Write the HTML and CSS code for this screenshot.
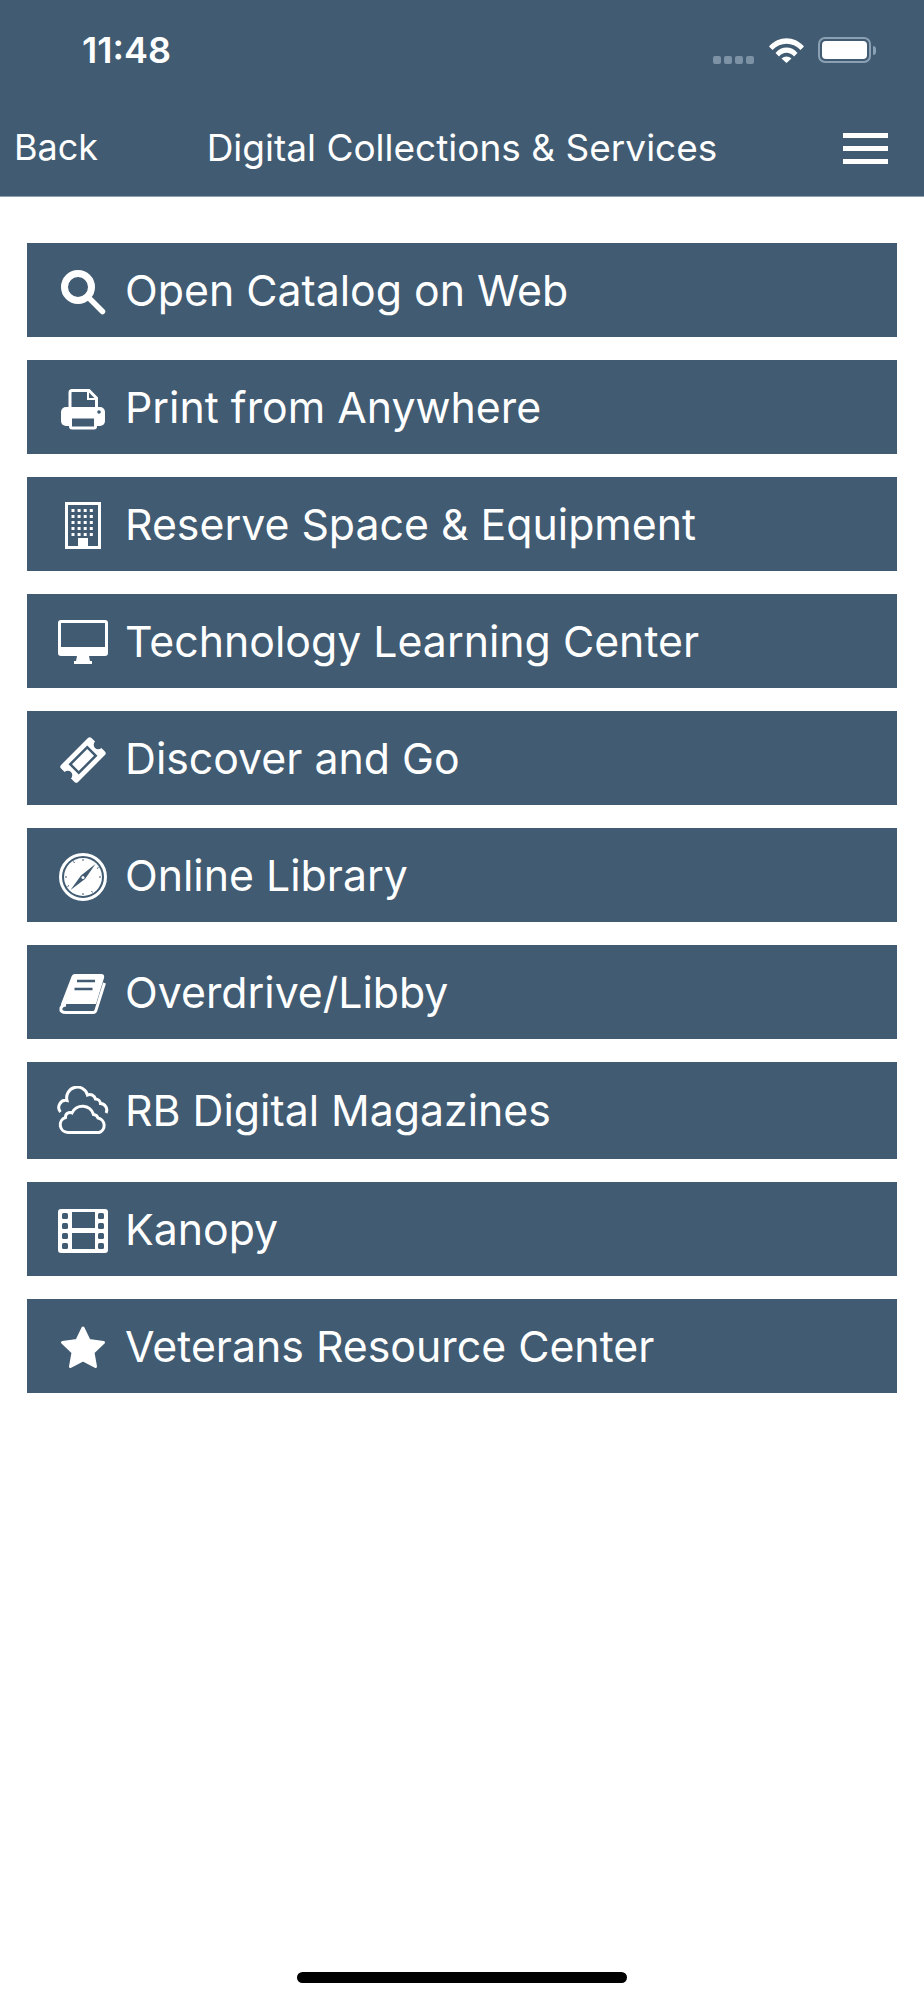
FILE: index.html
```html
<!DOCTYPE html>
<html lang="en">
<head>
  <meta charset="UTF-8" />
  <title>Digital Collections &amp; Services</title>
  <meta name="viewport" content="width=device-width, initial-scale=1.0" />
  <link rel="stylesheet" href="styles.css">
</head>
<body>
  <header class="topbar">
    <div class="status">
      <span class="time">11:48</span>
      <div class="status-icons">
        <div class="signal"><i></i><i></i><i></i><i></i></div>
        <svg class="wifi" viewBox="0 0 35 26">
          <path d="M0 9.500C9.500 -1.500 25.500 -1.500 35 9.500L31.500 13C23.500 4.500 11.500 4.500 3.500 13Z"/>
          <path d="M6.500 16C12.500 8.800 22.500 8.800 28.500 16L25 19.500C20.800 14.600 14.200 14.600 10 19.500Z"/>
          <path d="M12.500 21.500C15.500 18.800 19.500 18.800 22.500 21.500L17.500 26Z"/>
        </svg>
        <div class="battery"><div class="battery-level"></div></div>
        <div class="battery-nub"></div>
      </div>
    </div>
    <nav class="navbar">
      <a class="back">Back</a>
      <h1>Digital Collections &amp; Services</h1>
      <div class="menu"><i></i><i></i><i></i></div>
    </nav>
  </header>

  <main class="links">
    <a class="link">
      <svg class="icon" viewBox="0 0 52 52"><circle cx="21" cy="21" r="13.500" class="line thick"/><path d="M33 33L45.500 45.500" class="line handle"/></svg>
      <span>Open Catalog on Web</span>
    </a>
    <a class="link">
      <svg class="icon" viewBox="0 0 52 52">
        <path d="M13 26V9.500Q13 7.500 15 7.500H32L39.500 15V26" class="line"/>
        <path d="M31 8V16H39" class="line thin"/>
        <rect x="4" y="24" width="44" height="19" rx="5" class="fill"/>
        <rect x="13.500" y="34" width="25" height="11" rx="1.500" class="dark-box"/>
        <circle cx="42" cy="29" r="1.800" class="dark"/>
      </svg>
      <span>Print from Anywhere</span>
    </a>
    <a class="link">
      <svg class="icon" viewBox="0 0 52 52">
        <rect x="9.500" y="3.500" width="33" height="44" class="line"/>
        <path d="M14.500 10.500H38M14.500 16.500H38M14.500 22.500H38M14.500 28.500H38M14.500 34.500H38" class="line dots"/>
        <rect x="21" y="38" width="10" height="10" class="fill"/>
      </svg>
      <span>Reserve Space &amp; Equipment</span>
    </a>
    <a class="link">
      <svg class="icon" viewBox="0 0 52 52">
        <path fill-rule="evenodd" class="fill" d="M4 3H48Q51 3 51 6V36Q51 39 48 39H32L33 44H35V47H17V44H19L20 39H4Q1 39 1 36V6Q1 3 4 3ZM4 6V30H48V6Z"/>
      </svg>
      <span>Technology Learning Center</span>
    </a>
    <a class="link">
      <svg class="icon" viewBox="0 0 52 52">
        <g transform="rotate(-45 26 26)">
          <path class="fill" d="M7 14H45Q47.500 14 47.500 16.500V21.500A4.500 4.500 0 0 0 47.500 30.500V35.500Q47.500 38 45 38H7Q4.500 38 4.500 35.500V30.500A4.500 4.500 0 0 0 4.500 21.500V16.500Q4.500 14 7 14Z"/>
          <rect x="14" y="20" width="24" height="12" class="dark-line"/>
        </g>
      </svg>
      <span>Discover and Go</span>
    </a>
    <a class="link">
      <svg class="icon" viewBox="0 0 52 52">
        <circle cx="26" cy="26" r="22.500" class="line"/>
        <circle cx="26" cy="26" r="19" class="fill"/>
        <path d="M38.500 13L28 28L24 24.500ZM13.500 39L28 28L24 24.500Z" class="dark"/>
        <circle cx="26" cy="26.500" r="1.500" class="fill"/>
        <path d="M26 8V10M26 42V44M8 26H10M42 26H44M16.500 10.500L17.500 12M35.500 41.500L34.500 40M10.500 35.500L12 34.500M41.500 16.500L40 17.500" class="dark-tick"/>
      </svg>
      <span>Online Library</span>
    </a>
    <a class="link">
      <svg class="icon" viewBox="0 0 52 52">
        <path class="fill" d="M18 6H44Q48 6 47 10L39 36H10Q7 36 5 38Q4 39 4 36L14 10Q15 6 18 6Z"/>
        <path d="M20 13H38M17.500 21H35.500" class="dark-line"/>
        <path d="M47.500 15L39 42Q38.500 44.500 36 44.500H9Q3 44.500 4 40Q5 37 9 37" class="line"/>
      </svg>
      <span>Overdrive/Libby</span>
    </a>
    <a class="link link-tall">
      <svg class="icon" viewBox="0 0 52 52">
        <path class="line" d="M11 46.500A7.700 7.700 0 0 1 8.500 31.500A4.500 4.500 0 0 1 15 27A11.500 11.500 0 0 1 36.500 28.500A5 5 0 0 1 41 32A7.500 7.500 0 0 1 42 46.500Z"/>
        <path class="line" d="M3.500 26A7 7 0 0 1 10 14.500A10.500 10.500 0 0 1 30.500 9A6 6 0 0 1 38.500 13A5 5 0 0 1 43.500 17.500A6.500 6.500 0 0 1 49 27"/>
      </svg>
      <span>RB Digital Magazines</span>
    </a>
    <a class="link">
      <svg class="icon" viewBox="0 0 52 52">
        <rect x="1" y="4" width="50" height="44" rx="3" class="fill"/>
        <rect x="15" y="7" width="23" height="16" class="dark"/>
        <rect x="15" y="28" width="23" height="16" class="dark"/>
        <g class="dark">
          <rect x="5" y="8" width="6" height="6" rx="1.500"/><rect x="5" y="18" width="6" height="6" rx="1.500"/>
          <rect x="5" y="28" width="6" height="6" rx="1.500"/><rect x="5" y="38" width="6" height="6" rx="1.500"/>
          <rect x="41" y="8" width="6" height="6" rx="1.500"/><rect x="41" y="18" width="6" height="6" rx="1.500"/>
          <rect x="41" y="28" width="6" height="6" rx="1.500"/><rect x="41" y="38" width="6" height="6" rx="1.500"/>
        </g>
      </svg>
      <span>Kanopy</span>
    </a>
    <a class="link">
      <svg class="icon" viewBox="0 0 52 52">
        <path class="star" d="M26 6L32 18.500L46.500 20.500L36 30.500L38.500 44.500L26 38L13.500 44.500L16 30.500L5.500 20.500L20 18.500Z"/>
      </svg>
      <span>Veterans Resource Center</span>
    </a>
  </main>

  <div class="home-bar"></div>
</body>
</html>
```

FILE: styles.css
```css
* {
  box-sizing: border-box;
}
body {
  background: #fff;
  color: #fff;
  font-family: Inter, 'Noto Sans', sans-serif;
  margin: 0;
  display: flex;
  flex-direction: column;
  min-height: 2000px;
}
.topbar {
  background: #405b72;
  height: 197px;
  border-bottom: 1px solid #8ba0b2;
}
.status {
  display: flex;
  justify-content: space-between;
  align-items: center;
  height: 100px;
  padding: 0 48px 0 82px;
}
.time {
  font-size: 36px;
  font-weight: 600;
}
.status-icons {
  display: flex;
  align-items: center;
}
.signal {
  display: flex;
  gap: 3px;
  margin: 20px 15px 0 0;
}
.signal i {
  width: 8px;
  height: 8px;
  border-radius: 2px;
  background: #7d92a5;
}
.wifi {
  width: 35px;
  height: 26px;
  fill: #fff;
  margin-right: 14px;
}
.battery {
  width: 53px;
  height: 26px;
  border: 2px solid #8ba0b2;
  border-radius: 7px;
  padding: 2px;
}
.battery-level {
  height: 100%;
  background: #fff;
  border-radius: 4px;
}
.battery-nub {
  width: 3px;
  height: 9px;
  margin-left: 2px;
  background: #8ba0b2;
  border-radius: 0 3px 3px 0;
}
.navbar {
  display: grid;
  grid-template-columns: 1fr auto 1fr;
  align-items: center;
  height: 96px;
  padding: 0 36px;
}
.back {
  font-size: 36px;
  margin: -2px 0 0 -22px;
}
.navbar h1 {
  margin: -2px 0 0;
  font-size: 37px;
  font-weight: 400;
}
.menu {
  justify-self: end;
  width: 45px;
  display: flex;
  flex-direction: column;
  gap: 8px;
}
.menu i {
  height: 5px;
  background: #fff;
}
.links {
  display: flex;
  flex-direction: column;
  gap: 23px;
  padding: 46px 27px 0;
}
.link {
  display: flex;
  align-items: center;
  gap: 17px;
  height: 94px;
  padding-left: 30px;
  background: #405b72;
  font-size: 42.800px;
  font-weight: 400;
}
.link span {
  margin-left: -1px;
}
.link-tall {
  height: 97px;
}
.icon {
  width: 52px;
  height: 52px;
  flex: none;
  margin-top: 3px;
}
.line {
  fill: none;
  stroke: #fff;
  stroke-width: 3;
}
.line.thick {
  stroke-width: 7;
}
.line.thin {
  stroke-width: 2;
}
.line.handle {
  stroke-width: 5.500;
  stroke-linecap: round;
}
.line.dots {
  stroke-dasharray: 3 3.100;
}
.fill {
  fill: #fff;
}
.dark {
  fill: #405b72;
}
.dark-box {
  fill: #405b72;
  stroke: #fff;
  stroke-width: 3;
}
.dark-line {
  fill: none;
  stroke: #405b72;
  stroke-width: 2.500;
}
.dark-tick {
  fill: none;
  stroke: #405b72;
  stroke-width: 1;
}
.star {
  fill: #fff;
  stroke: #fff;
  stroke-width: 3;
  stroke-linejoin: round;
}
.home-bar {
  width: 330px;
  height: 11px;
  margin: auto auto 17px;
  background: #000;
  border-radius: 6px;
}
```
